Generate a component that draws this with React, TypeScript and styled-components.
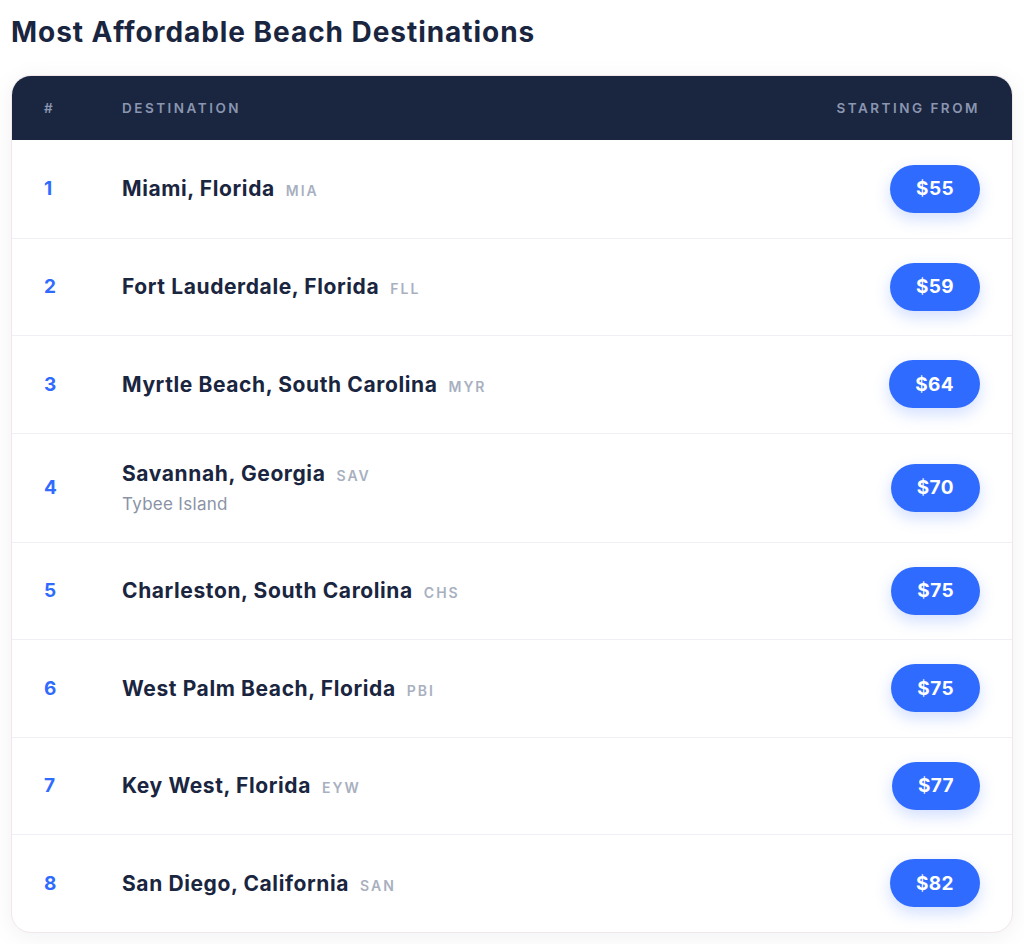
import React from "react";
import styled, { createGlobalStyle } from "styled-components";

const Global = createGlobalStyle`
  html, body { margin: 0; padding: 0; background: #ffffff; }
  body { font-family: "Inter", "Noto Sans", sans-serif; -webkit-font-smoothing: antialiased; }
  * { box-sizing: border-box; }
`;

const Page = styled.div`
  width: 1024px;
  padding: 14px 11px 11px 11px;
`;

const Title = styled.h1`
  margin: 0 0 25px 0;
  font-size: 28px;
  line-height: 36px;
  font-weight: 700;
  color: #1a2540;
  letter-spacing: 0.95px;
`;

const Card = styled.div`
  border: 1px solid #f1e6ec;
  border-radius: 20px;
  overflow: hidden;
  background: #ffffff;
  box-shadow: 0 4px 24px rgba(20, 30, 60, 0.06);
`;

const Grid = styled.div`
  display: grid;
  grid-template-columns: 78px 1fr auto;
  align-items: center;
  padding: 0 32px;
`;

const Header = styled(Grid)`
  background: #1a2540;
  height: 64px;
`;

const HeadCell = styled.div<{ $right?: boolean }>`
  font-size: 13.5px;
  font-weight: 600;
  letter-spacing: 2.5px;
  color: #8a96b0;
  text-transform: uppercase;
  text-align: ${(p) => (p.$right ? "right" : "left")};
`;

const Row = styled(Grid)<{ $tall?: boolean }>`
  height: ${(p) => (p.$tall ? "109px" : "97.5px")};
  border-top: 1px solid #efeff5;
  &:first-of-type { border-top: none; }
`;

const Rank = styled.div`
  font-size: 19px;
  font-weight: 700;
  color: #2f6bff;
`;

const Dest = styled.div`
  display: flex;
  flex-direction: column;
  gap: 8px;
`;

const NameLine = styled.div`
  display: flex;
  align-items: baseline;
  gap: 11px;
`;

const Name = styled.span`
  font-size: 21px;
  font-weight: 700;
  color: #1a2540;
  letter-spacing: 0.6px;
`;

const Code = styled.span`
  font-size: 14px;
  font-weight: 600;
  letter-spacing: 2px;
  color: #a8b0bf;
`;

const Sub = styled.div`
  font-size: 17px;
  font-weight: 400;
  color: #8a93a6;
  letter-spacing: 0.3px;
`;

const Price = styled.div`
  justify-self: end;
  height: 48px;
  padding: 0 26px;
  border-radius: 24px;
  background: #2f6bff;
  color: #ffffff;
  font-size: 19px;
  font-weight: 700;
  letter-spacing: 0.4px;
  display: flex;
  align-items: center;
  box-shadow: 0 6px 16px rgba(47, 107, 255, 0.22);
`;

const Body = styled.div``;

const data = [
  { name: "Miami, Florida", code: "MIA", price: "$55" },
  { name: "Fort Lauderdale, Florida", code: "FLL", price: "$59" },
  { name: "Myrtle Beach, South Carolina", code: "MYR", price: "$64" },
  { name: "Savannah, Georgia", code: "SAV", price: "$70", sub: "Tybee Island" },
  { name: "Charleston, South Carolina", code: "CHS", price: "$75" },
  { name: "West Palm Beach, Florida", code: "PBI", price: "$75" },
  { name: "Key West, Florida", code: "EYW", price: "$77" },
  { name: "San Diego, California", code: "SAN", price: "$82" },
];

export default function App() {
  return (
    <Page>
      <Global />
      <Title>Most Affordable Beach Destinations</Title>
      <Card>
        <Header>
          <HeadCell>#</HeadCell>
          <HeadCell>Destination</HeadCell>
          <HeadCell $right>Starting From</HeadCell>
        </Header>
        <Body>
          {data.map((d, i) => (
            <Row key={d.code} $tall={!!d.sub}>
              <Rank>{i + 1}</Rank>
              <Dest>
                <NameLine>
                  <Name>{d.name}</Name>
                  <Code>{d.code}</Code>
                </NameLine>
                {d.sub && <Sub>{d.sub}</Sub>}
              </Dest>
              <Price>{d.price}</Price>
            </Row>
          ))}
        </Body>
      </Card>
    </Page>
  );
}
